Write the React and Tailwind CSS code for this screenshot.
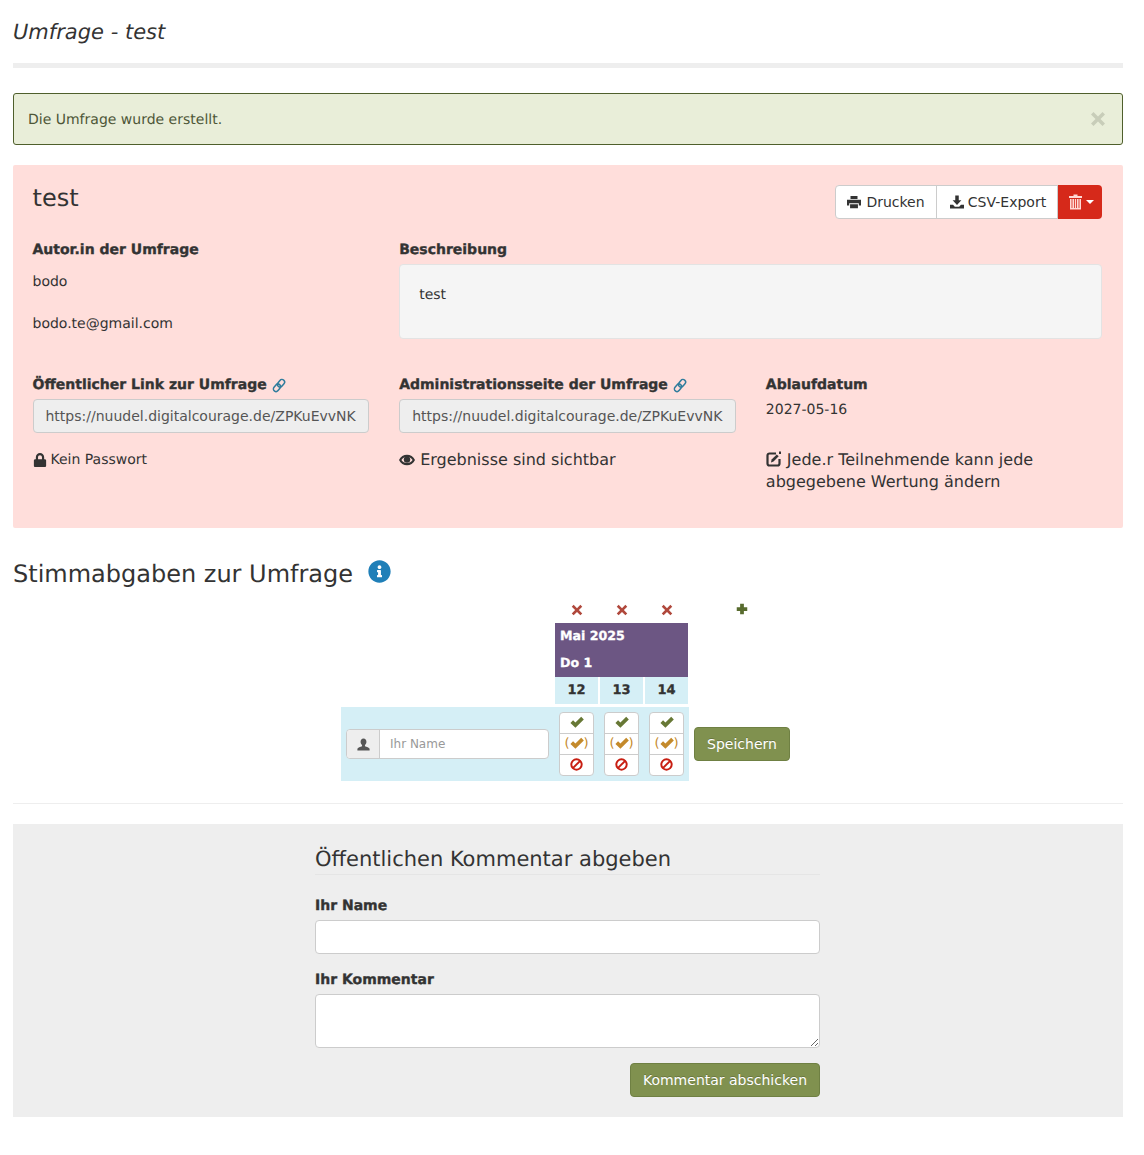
import React from 'react';
import { FaInfoCircle, FaLock } from 'react-icons/fa';

const font = { fontFamily: '"DejaVu Sans", sans-serif' };

const Times = ({ size = 12, className = '' }) => (
  <svg width={size} height={size} viewBox="0 0 16 16" fill="currentColor" className={className}>
    <path d="M3.5 1 8 5.500 12.500 1 15 3.500 10.500 8 15 12.500 12.500 15 8 10.500 3.500 15 1 12.500 5.500 8 1 3.500z" />
  </svg>
);

const Plus = ({ size = 12 }) => (
  <svg width={size} height={size} viewBox="0 0 16 16" fill="currentColor">
    <path d="M5.500 1h5v4.500H15v5h-4.500V15h-5v-4.500H1v-5h4.500z" />
  </svg>
);

const Check = ({ size = 14 }) => (
  <svg width={size} height={size} viewBox="0 0 16 16" fill="currentColor">
    <path d="M0.500 9 3.500 6 6.200 8.700 12.800 2 15.800 5 6.200 14.500z" />
  </svg>
);

const Ban = ({ size = 13 }) => (
  <svg width={size} height={size} viewBox="0 0 16 16" fill="none" stroke="currentColor" strokeWidth="2.4">
    <circle cx="8" cy="8" r="6.4" />
    <path d="M12.500 3.500 3.500 12.500" />
  </svg>
);

const Printer = () => (
  <svg width="14" height="14" viewBox="0 0 16 16" fill="currentColor">
    <path d="M4 1h8v3.500H4zM0 5.500h16V12h-2.500V9.500h-11V12H0zM3.500 10.500h9V15h-9z" />
  </svg>
);

const Download = () => (
  <svg width="14" height="14" viewBox="0 0 16 16" fill="currentColor">
    <path d="M6 0.500h4v5.500h3l-5 5.500-5-5.500h3zM0 11h3.500l2 2.500h5l2-2.500H16v4.500H0z" />
  </svg>
);

const Trash = () => (
  <svg width="15" height="16" viewBox="0 0 15 16" fill="#ffd9d4">
    <path d="M5.500 0.500h4v1.500H14v2H1V2h4.500z" />
    <path d="M2 5h1.600v10H2zM4.400 5H6v10H4.400zM6.800 5h1.400v10H6.800zM9 5h1.600v10H9zM11.400 5H13v10h-1.600z" />
    <path d="M2 14h11v1.500H2z" />
  </svg>
);

const ChainLink = () => (
  <svg width="14" height="15" viewBox="0 0 16 16" fill="none" stroke="#2f7c9c" strokeWidth="1.7">
    <rect x="7.300" y="0.700" width="6" height="9.400" rx="3" transform="rotate(40 10.300 5.400)" />
    <rect x="2.700" y="5.900" width="6" height="9.400" rx="3" transform="rotate(40 5.700 10.600)" />
  </svg>
);

const Eye = () => (
  <svg width="16" height="14" viewBox="0 0 16 14" fill="currentColor">
    <path fillRule="evenodd" d="M0 7C3 0 13 0 16 7 13 14 3 14 0 7zM2.400 7C4.500 11 11.500 11 13.600 7 11.500 3 4.500 3 2.400 7z" />
    <circle cx="8" cy="6.600" r="3.200" />
  </svg>
);

const EditBox = () => (
  <svg width="16" height="16" viewBox="0 0 16 16" className="inline-block mr-[5px] align-[-2px]">
    <path d="M10 2.500H3.500A2 2 0 0 0 1.500 4.500v8a2 2 0 0 0 2 2h8a2 2 0 0 0 2-2V8" fill="none" stroke="#333" strokeWidth="2.2" />
    <path d="M5 11.500 5.600 8.600 10.800 3.400 12.700 5.300 7.500 10.500z" fill="#333" />
    <path d="M13 0.500h2v2.400h-2z" fill="#333" />
  </svg>
);

const UserIcon = () => (
  <svg width="13" height="13" viewBox="0 0 16 16" fill="#555">
    <path d="M8 0.500c2.300 0 3.600 1.700 3.600 4 0 2-1 3.400-1.800 4.200v1.300c2 .6 5.200 1.500 5.700 3.200v2.300H.5v-2.300c.5-1.700 3.700-2.600 5.700-3.200V8.700C5.400 7.900 4.400 6.500 4.400 4.500c0-2.300 1.300-4 3.600-4z" />
  </svg>
);

const Label = ({ children, className = '' }) => (
  <div className={`pt-[1px] -mb-[1px] font-bold text-[14px] leading-[20px] text-[#333] [-webkit-text-stroke:0.35px_#333] ${className}`}>{children}</div>
);

const UrlField = ({ value }) => (
  <input
    readOnly
    value={value}
    className="block w-full h-[34px] px-3 text-[14px] text-[#555] bg-[#eee] border border-[#ccc] rounded outline-none"
  />
);

const VoteBox = () => (
  <div className="w-[35px] h-[64px] flex flex-col bg-white border border-[#ccc] rounded">
    <div className="h-[21px] pb-[2px] flex items-center justify-center text-[#677835] border-b border-[#ccc]">
      <Check />
    </div>
    <div className="h-[21px] pb-[2px] flex items-center justify-center text-[#c48a2c] text-[13px] border-b border-[#ccc]">
      <span className="leading-none">(</span>
      <Check />
      <span className="leading-none">)</span>
    </div>
    <div className="h-[20px] pb-[2px] flex items-center justify-center text-[#c81e12]">
      <Ban />
    </div>
  </div>
);

const GreenButton = ({ children, className = '' }) => (
  <button className={`h-[34px] text-[14px] text-white bg-[#80914f] border border-[#6f8043] rounded [text-shadow:0_-1px_0_rgba(0,0,0,0.2)] ${className}`}>
    {children}
  </button>
);

const App = () => (
  <div style={font} className="pl-[13px] pr-[21px] text-[14px] leading-[20px] text-[#333] bg-white h-[1155px] [text-rendering:geometricPrecision]">
    <h1 className="pt-[20px] pb-[19px] text-[21px] leading-[24px] italic border-b-[5px] border-[#eee]">Umfrage - test</h1>

    <div className="mt-[25px] h-[52px] flex items-center justify-between pl-[14px] pr-[16px] text-[#4d5637] bg-[#e9eed9] border border-[#4f5f2c] rounded-[3px]">
      <span className="pt-[2px]">Die Umfrage wurde erstellt.</span>
      <Times size={16} className="text-[#c8cdb9]" />
    </div>

    <section className="mt-[20px] h-[363px] pl-[19.5px] pr-[20.5px] pt-5 bg-[#ffdedb] rounded-[2px]">
      <div className="h-[54px] flex justify-between">
        <h2 className="text-[24px] leading-[26px]">test</h2>
        <div className="flex h-[34px] mr-[0.5px]">
          <button className="w-[102px] flex items-center justify-center gap-[5px] bg-white border border-[#ccc] rounded-l">
            <Printer /> Drucken
          </button>
          <button className="w-[122px] -ml-[1px] pl-[2px] flex items-center justify-center gap-[4px] bg-white border border-[#ccc]">
            <Download /> CSV-Export
          </button>
          <button className="w-[44px] pl-[2px] flex items-center justify-center gap-[3px] text-white bg-[#d6291a] rounded-r">
            <Trash />
            <span className="border-x-[4px] border-t-[4px] border-x-transparent border-t-white" />
          </button>
        </div>
      </div>

      <div className="grid grid-cols-3 gap-x-[30px]">
        <div>
          <Label>Autor.in der Umfrage</Label>
          <p className="mt-[13px]">bodo</p>
          <p className="mt-[22px]">bodo.te@gmail.com</p>
        </div>
        <div className="col-span-2">
          <Label>Beschreibung</Label>
          <div className="mt-[5px] mr-[0.5px] h-[75px] px-[19px] pt-[20px] bg-[#f5f5f5] border border-[#e3e3e3] rounded">test</div>
        </div>
      </div>

      <div className="mt-[35px] grid grid-cols-3 gap-x-[30px]">
        <div>
          <Label className="flex items-center gap-[5px]">
            Öffentlicher Link zur Umfrage <ChainLink />
          </Label>
          <div className="mt-[5px]"><UrlField value="https://nuudel.digitalcourage.de/ZPKuEvvNK" /></div>
          <p className="mt-[17px] flex items-center gap-[4px]"><FaLock className="text-[14px]" /> Kein Passwort</p>
        </div>
        <div>
          <Label className="flex items-center gap-[5px]">
            Administrationsseite der Umfrage <ChainLink />
          </Label>
          <div className="mt-[5px]"><UrlField value="https://nuudel.digitalcourage.de/ZPKuEvvNK" /></div>
          <p className="mt-[16px] text-[16px] leading-[22px] flex items-center gap-[5px]"><Eye /> Ergebnisse sind sichtbar</p>
        </div>
        <div>
          <Label>Ablaufdatum</Label>
          <p className="mt-[6px]">2027-05-16</p>
          <p className="mt-[29px] text-[16px] leading-[22px]">
            <EditBox />
            Jede.r Teilnehmende kann jede abgegebene Wertung ändern
          </p>
        </div>
      </div>
    </section>

    <div className="mt-[28px] h-[41px] flex items-start gap-[15px]">
      <h2 className="text-[24px] leading-[36px]">Stimmabgaben zur Umfrage</h2>
      <FaInfoCircle className="mt-[4px] text-[#1f7fb8] text-[23px]" />
    </div>

    <div className="ml-[328px] grid grid-cols-[214px_45px_45px_44px_102px]">
      <div className="h-[26px]" />
      {[0, 1, 2].map((i) => (
        <div key={i} className="w-[43px] flex items-center justify-center text-[#b0483c]"><Times /></div>
      ))}
      <div className="flex items-center justify-center pl-[3px] pb-[2px] text-[#586b2e]"><Plus /></div>

      <div />
      <div className="col-span-3 w-[133px] h-[54px] px-[5px] font-bold text-[12.6px] text-white bg-[#6c5683] [-webkit-text-stroke:0.3px_#fff]">
        <div className="h-[27px] leading-[25px]">Mai 2025</div>
        <div className="h-[27px] leading-[25px]">Do 1</div>
      </div>
      <div />

      <div />
      {['12', '13', '14'].map((h) => (
        <div key={h} className="w-[43px] h-[27px] flex items-center justify-center font-bold text-[13px] bg-[#d5eff6] [-webkit-text-stroke:0.3px_#333]">{h}</div>
      ))}
      <div />

      <div className="mt-[3px] h-[74px] col-span-4 w-[348px] flex items-center bg-[#d5eff6]">
        <div className="ml-[5px] w-[203px] h-[30px] flex bg-white border border-[#ccc] rounded">
          <div className="w-[33px] flex items-center justify-center bg-[#eee] border-r border-[#ccc] rounded-l"><UserIcon /></div>
          <input placeholder="Ihr Name" className="min-w-0 flex-1 px-[10px] text-[12px] outline-none placeholder:text-[#999]" />
        </div>
        <div className="ml-[10px] flex gap-[10px]">
          <VoteBox />
          <VoteBox />
          <VoteBox />
        </div>
      </div>
      <div className="mt-[3px] h-[74px] flex items-center pl-[5px]">
        <GreenButton className="w-[96px]">Speichern</GreenButton>
      </div>
    </div>

    <hr className="mt-[22px] border-[#eee]" />

    <section className="mt-[20px] h-[293px] pl-[302px] pr-[303px] pt-[20px] bg-[#eee]">
      <h3 className="pb-[1px] pt-[2px] text-[21px] leading-[27px] border-b border-[#e5e5e5]">Öffentlichen Kommentar abgeben</h3>
      <Label className="mt-[20px]">Ihr Name</Label>
      <input className="block mt-[5px] w-full h-[34px] px-3 bg-white border border-[#ccc] rounded outline-none" />
      <Label className="mt-[15px]">Ihr Kommentar</Label>
      <textarea className="block mt-[5px] w-full h-[54px] px-3 py-[6px] bg-white border border-[#ccc] rounded outline-none" />
      <div className="mt-[15px] flex justify-end">
        <GreenButton className="w-[190px]">Kommentar abschicken</GreenButton>
      </div>
    </section>
  </div>
);

export default App;
